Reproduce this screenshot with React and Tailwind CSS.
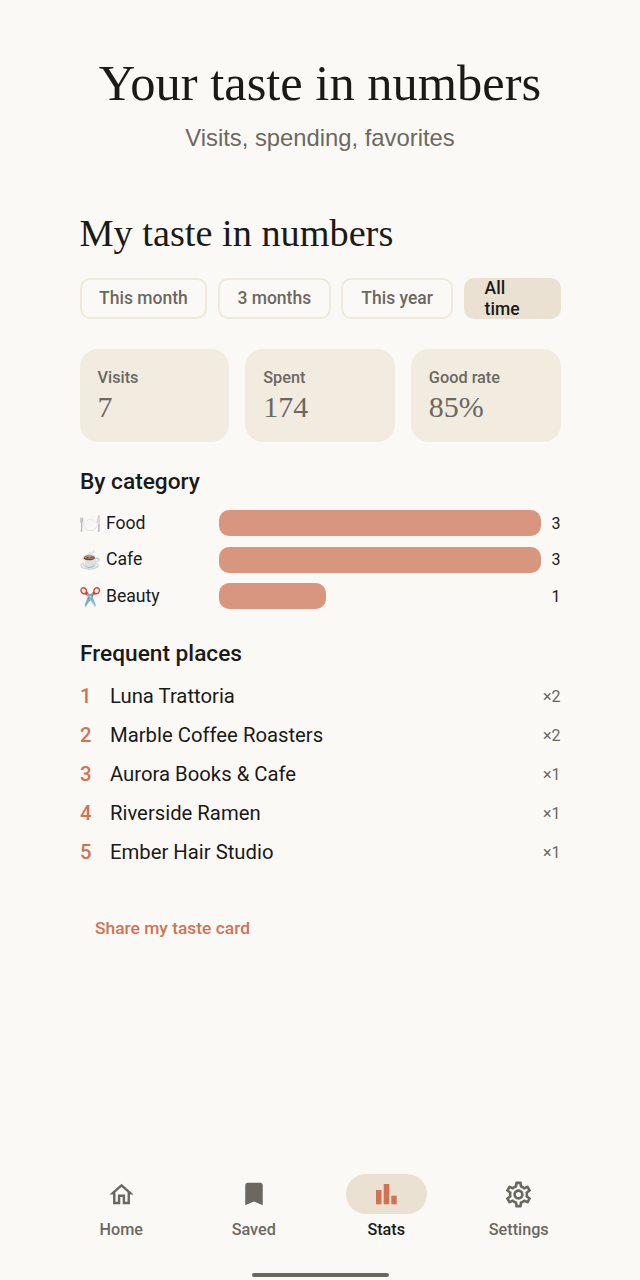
import { MdOutlineHome, MdBookmark, MdOutlineSettings } from "react-icons/md";

const tabs = [["This month", "w-[128px]"], ["3 months", "w-[113px]"], ["This year", "w-[112px]"]];
const stats = [["Visits", "7"], ["Spent", "174"], ["Good rate", "85%"]];
const cats = [["🍽️", "Food", "w-[322px]", "3"], ["☕", "Cafe", "w-[322px]", "3"], ["✂️", "Beauty", "w-[107px]", "1"]];
const places = [["Luna Trattoria", "×2"], ["Marble Coffee Roasters", "×2"], ["Aurora Books & Cafe", "×1"], ["Riverside Ramen", "×1"], ["Ember Hair Studio", "×1"]];

function Stats() {
  return (
    <svg width="28" height="28" viewBox="0 0 28 28" fill="#cf7355">
      <rect x="4" y="10" width="5.500" height="14.300" />
      <rect x="11.700" y="4" width="5.600" height="20.300" />
      <rect x="19.300" y="15.700" width="5.400" height="8.600" />
    </svg>
  );
}

function NavItem({ icon, label, active }) {
  return (
    <div className="flex-1 flex flex-col items-center">
      <div className={`w-[81px] h-[40px] rounded-full flex items-center justify-center ${active ? "bg-[#ebe1d3]" : ""}`}>{icon}</div>
      <div className={`mt-[4px] text-[16.200px] leading-[24px] font-medium ${active ? "text-[#1a1a18]" : "text-[#6b6862]"}`}>{label}</div>
    </div>
  );
}

export default function App() {
  return (
    <div className="w-[640px] h-[1280px] bg-[#fbf9f5] flex flex-col font-['Roboto',sans-serif] text-[#1a1a18]">
      <div className="flex-1 px-[79.500px] pt-[56px]">
        <h1 className="-mx-[40px] text-center font-['Liberation_Serif',serif] text-[50.500px] leading-[54px] text-[#1a1a18]">Your taste in numbers</h1>
        <p className="mt-[12px] text-center font-['Liberation_Sans',sans-serif] text-[23.800px] leading-[32px] text-[#6b6862]">Visits, spending, favorites</p>

        <h2 className="mt-[57px] font-['Liberation_Serif',serif] text-[38.300px] leading-[44px] text-[#1a1a18]">My taste in numbers</h2>

        <div className="mt-[23px] flex gap-[10.500px]">
          {tabs.map(([t, w]) => (
            <div key={t} className={`${w} h-[41px] rounded-[10px] border-2 border-[#efe8dc] flex items-center justify-center text-[17.500px] font-medium text-[#6b6862]`}>{t}</div>
          ))}
          <div className="w-[97px] h-[41px] rounded-[10px] bg-[#ebe1d3] pl-[21px] text-[17.500px] leading-[21px] font-medium text-[#1a1a18]">All<br />time</div>
        </div>

        <div className="mt-[30px] flex gap-[16px]">
          {stats.map(([l, v]) => (
            <div key={l} className="flex-1 h-[93px] rounded-[18px] bg-[#f1ebe0] pl-[18px] pt-[18px]">
              <div className="text-[16.300px] leading-[22px] font-medium text-[#6b6862]">{l}</div>
              <div className="font-['Liberation_Serif',serif] text-[30px] leading-[36px] text-[#6b6862]">{v}</div>
            </div>
          ))}
        </div>

        <h3 className="mt-[26px] pl-[0.500px] text-[22.700px] leading-[28px] font-medium text-[#1a1a18]">By category</h3>
        <div className="mt-[14px] flex flex-col gap-[10.500px]">
          {cats.map(([e, n, w, c]) => (
            <div key={n} className="flex items-center h-[26px]">
              <div className="w-[139.500px] flex items-center text-[17.600px] text-[#1a1a18]"><span className="w-[26.500px] text-[18px] font-['Noto_Color_Emoji',sans-serif]">{e}</span>{n}</div>
              <div className="flex-1"><div className={`${w} h-[26px] rounded-[10px] bg-[#d9967f]`}></div></div>
              <div className="mt-[1px] text-[16px] text-[#1a1a18]">{c}</div>
            </div>
          ))}
        </div>

        <h3 className="mt-[31px] pl-[0.500px] text-[22.700px] leading-[28px] font-medium text-[#1a1a18]">Frequent places</h3>
        <div className="mt-[9px] flex flex-col">
          {places.map(([n, c], i) => (
            <div key={n} className="flex items-center h-[39px]">
              <span className="w-[30.500px] pl-[0.500px] text-[20.300px] font-medium text-[#cf7355]">{i + 1}</span>
              <span className="flex-1 text-[20.300px] text-[#1a1a18]">{n}</span>
              <span className="text-[16px] text-[#6b6862]">{c}</span>
            </div>
          ))}
        </div>

        <div className="mt-[42px] pl-[15.500px] text-[17.400px] leading-[28px] font-medium text-[#cf7355]">Share my taste card</div>
      </div>

      <div className="px-[55px] flex">
        <NavItem icon={<MdOutlineHome size={29} color="#6b6862" />} label="Home" />
        <NavItem icon={<MdBookmark size={30} color="#6b6862" />} label="Saved" />
        <NavItem icon={<Stats />} label="Stats" active />
        <NavItem icon={<MdOutlineSettings size={31} color="#6b6862" />} label="Settings" />
      </div>
      <div className="mt-[31px] mb-[3px] mx-auto w-[137px] h-[4px] rounded-full bg-[#6b6862]"></div>
    </div>
  );
}
